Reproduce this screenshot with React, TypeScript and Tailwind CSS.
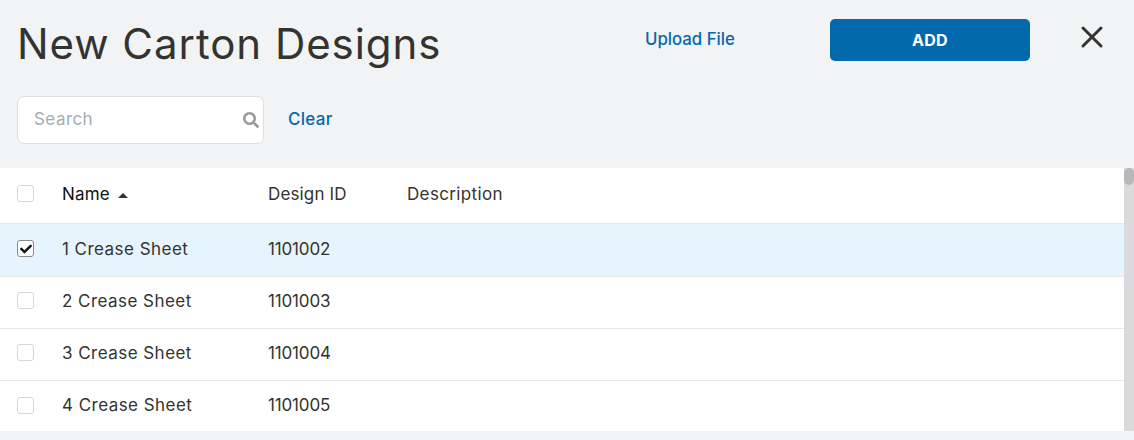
import { X } from "lucide-react";
import { FaSearch, FaCheck } from "react-icons/fa";

const rows = [
  { name: "1 Crease Sheet", id: "1101002", checked: true },
  { name: "2 Crease Sheet", id: "1101003", checked: false },
  { name: "3 Crease Sheet", id: "1101004", checked: false },
  { name: "4 Crease Sheet", id: "1101005", checked: false },
];

function Box({ checked }: { checked?: boolean }) {
  return (
    <div className={`-mt-[2px] ml-[17px] flex h-[17px] w-[17px] items-center justify-center rounded-[3px] border bg-white ${checked ? "border-[#8a8a8a]" : "border-[#d4d6d8]"}`}>
      {checked && <FaCheck size={12} className="text-[#111]" />}
    </div>
  );
}

export default function App() {
  return (
    <div className="flex h-[440px] w-[1134px] flex-col overflow-hidden bg-[#f2f3f5] font-['Inter',sans-serif] text-[#333330]">
      <header className="h-[168px] shrink-0">
        <div className="flex h-[96px] items-start">
          <h1 className="ml-[17px] mt-[18px] w-[601px] text-[42px] leading-[52px] tracking-[0.95px] font-normal text-[#333330]">New Carton Designs</h1>
          <a className="ml-[27px] mt-[29px] w-[185px] text-[16.8px] leading-[20px] font-medium text-[#0369ad]">Upload File</a>
          <button className="mt-[19px] h-[42px] w-[200px] rounded-[5px] bg-[#0369ad] text-[16px] tracking-[0.3px] font-bold text-white">ADD</button>
          <button className="ml-[44px] mt-[19px] text-[#333330]"><X size={36} strokeWidth={2} /></button>
        </div>
        <div className="flex items-center">
          <div className="ml-[17px] flex h-[48px] w-[247px] items-center justify-between rounded-[7px] border border-[#dcdddf] bg-white pl-[16px] pr-[4px]">
            <span className="text-[17px] tracking-[0.45px] text-[#a4adb3]">Search</span>
            <FaSearch size={16} className="text-[#9a9a9a]" />
          </div>
          <a className="ml-[24px] text-[17px] tracking-[0.3px] font-medium text-[#0369ad]">Clear</a>
        </div>
      </header>
      <div className="flex h-[263px] shrink-0 bg-white">
        <div className="w-[1124px] text-[17px]">
          <div className="grid h-[56px] grid-cols-[62px_206px_139px_1fr] items-center border-b border-[#e6e7e8] pb-[3px]">
            <Box />
            <div className="mt-[2px] flex items-center gap-[8px] tracking-[0.2px] text-[#111]">
              Name
              <span className="h-0 w-0 border-x-[5px] border-b-[5px] border-x-transparent border-b-[#333]" />
            </div>
            <div className="mt-[2px] tracking-[0.15px]">Design ID</div>
            <div className="mt-[2px] tracking-[0.35px]">Description</div>
          </div>
          {rows.map((r, i) => (
            <div key={r.id} className={`grid grid-cols-[62px_206px_139px_1fr] items-center border-b border-[#e6e7e8] ${i === 0 ? "h-[53px] bg-[#e6f4fd] pb-[1px]" : "h-[52px] pb-[2px]"} ${i === 3 ? "border-b-0" : ""}`}>
              <Box checked={r.checked} />
              <div className="tracking-[0.46px]">{r.name}</div>
              <div className="tracking-[-0.15px]">{r.id}</div>
              <div />
            </div>
          ))}
        </div>
        <div className="w-[10px] bg-[#dadadc]">
          <div className="h-[17px] rounded-[5px] bg-[#b8b8ba]" />
        </div>
      </div>
    </div>
  );
}
